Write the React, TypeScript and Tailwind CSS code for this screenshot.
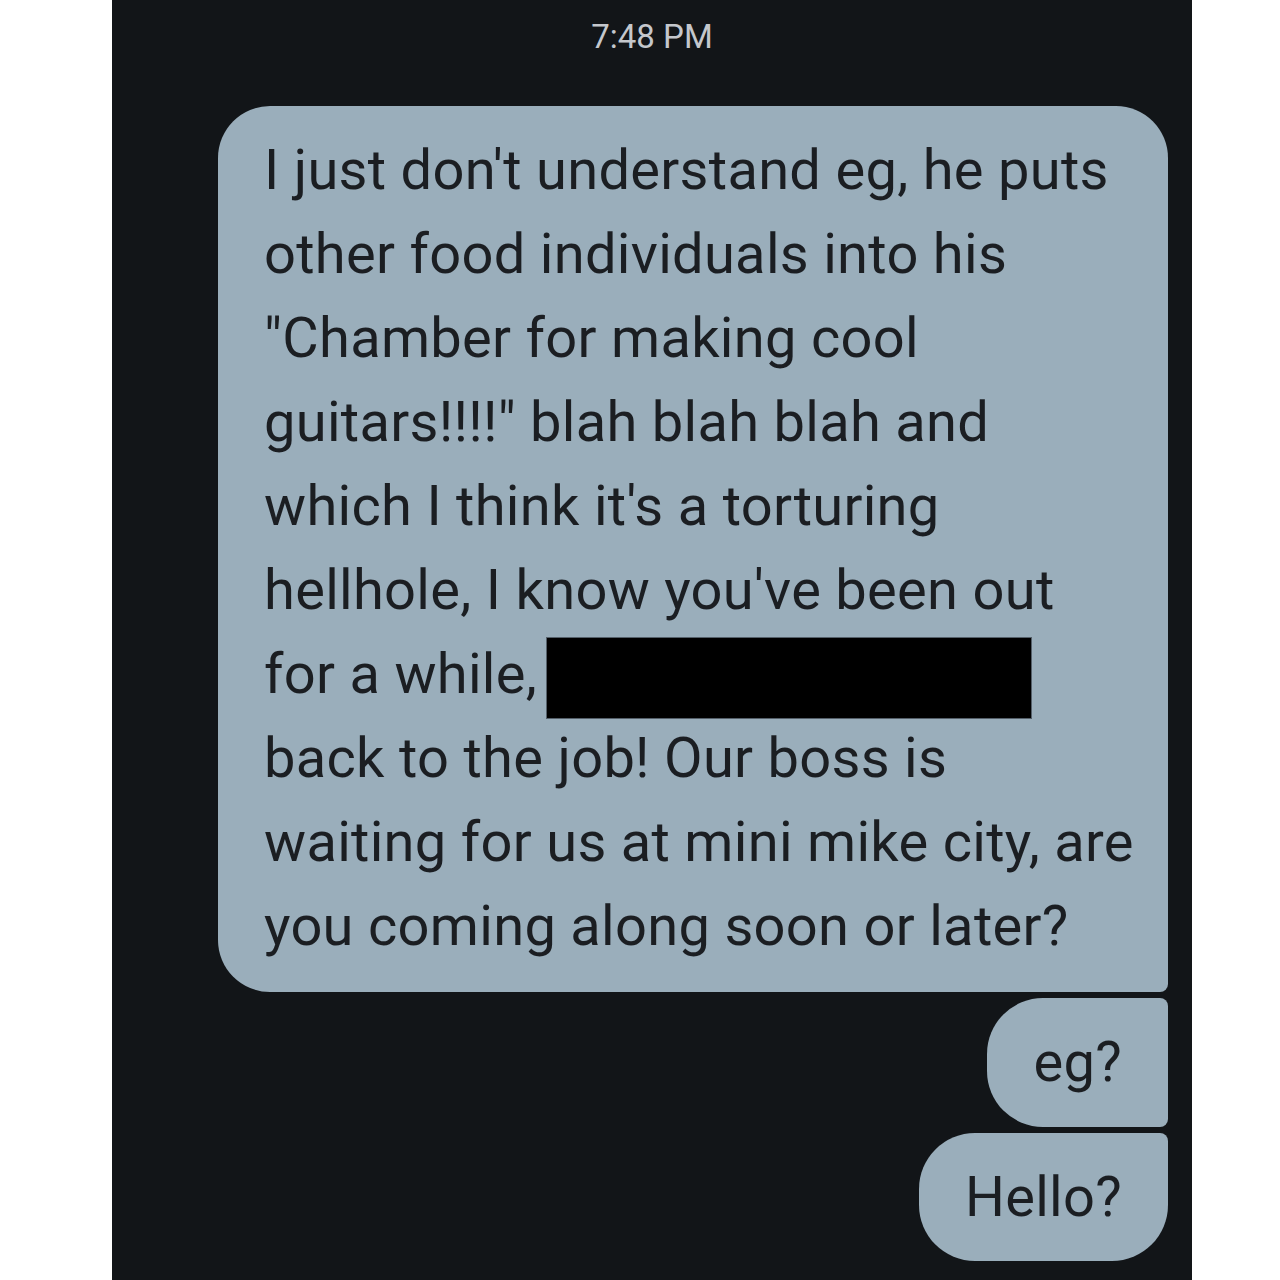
const LINES_BEFORE = [
  "I just don't understand eg, he puts",
  "other food individuals into his",
  '"Chamber for making cool',
  'guitars!!!!" blah blah blah and',
  "which I think it's a torturing",
  "hellhole, I know you've been out",
];

const LINES_AFTER = [
  "back to the job! Our boss is",
  "waiting for us at mini mike city, are",
  "you coming along soon or later?",
];

function Bubble({ children, className }: { children: React.ReactNode; className: string }) {
  return (
    <div className={`bg-[#9aaebb] text-[#1b1e22] text-[56px] tracking-[0.3px] px-[46px] pt-[22px] leading-[84px] ${className}`}>
      {children}
    </div>
  );
}

export default function App() {
  return (
    <div className="w-[1280px] h-[1280px] bg-white" style={{ fontFamily: 'Roboto, "Noto Sans", sans-serif' }}>
      <div className="ml-[112px] w-[1080px] h-[1280px] bg-[#121518] overflow-hidden flex flex-col items-end pr-[24px]">
        <div className="w-full h-[74px] flex items-center justify-center pl-[24px] text-[33px] text-[#c4c7cc]">
          7:48 PM
        </div>

        <Bubble className="mt-[32px] w-[950px] pb-[24px] rounded-t-[52px] rounded-bl-[52px] rounded-br-[8px]">
          {LINES_BEFORE.map((line) => (
            <div key={line} className="whitespace-nowrap">{line}</div>
          ))}
          <div className="whitespace-nowrap flex items-start h-[84px]">
            <span>for a while,</span>
            <span className="ml-[9px] mt-[5px] inline-block w-[486px] h-[82px] bg-black border border-[#55606a]" />
          </div>
          {LINES_AFTER.map((line) => (
            <div key={line} className="whitespace-nowrap">{line}</div>
          ))}
        </Bubble>

        <Bubble className="mt-[6px] pb-[23px] rounded-l-[56px] rounded-r-[8px]">eg?</Bubble>
        <Bubble className="mt-[6px] pb-[22px] rounded-l-[56px] rounded-tr-[8px] rounded-br-[56px]">Hello?</Bubble>
      </div>
    </div>
  );
}
